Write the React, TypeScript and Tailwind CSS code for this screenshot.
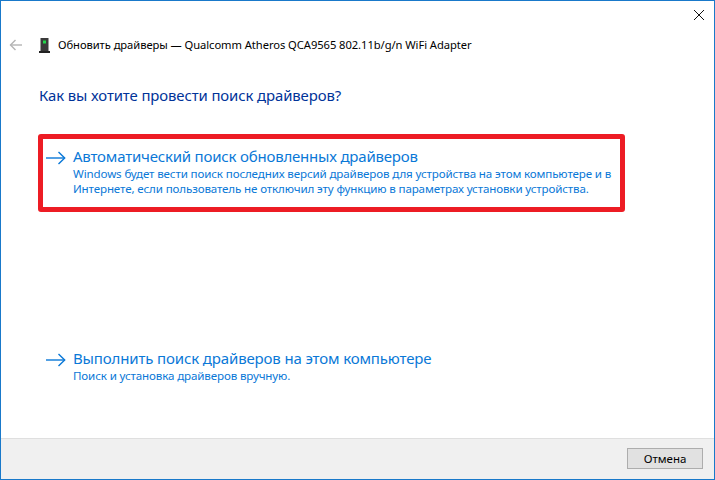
const font = "font-['Noto_Sans',sans-serif]"

function ArrowIcon() {
  return (
    <svg width="20" height="14" viewBox="0 0 20 14" className="shrink-0 mt-[5px]" fill="none" stroke="#0a78d7" strokeWidth="1.4">
      <path d="M0 7h18.5" />
      <path d="M12.5 1l6.2 6-6.2 6" />
    </svg>
  )
}

function Option({ title, titleClass, lines }: { title: string; titleClass: string; lines: string[] }) {
  return (
    <div className="flex gap-[7px]">
      <ArrowIcon />
      <div>
        <div className={`text-[15px] leading-[20px] text-[#0a78d7] whitespace-nowrap ${titleClass}`}>{title}</div>
        {lines.map((l) => (
          <div key={l} className="text-[11.6px] leading-[15px] tracking-[-0.14px] text-[#0a78d7] whitespace-nowrap">{l}</div>
        ))}
      </div>
    </div>
  )
}

export default function App() {
  return (
    <div className={`w-[715px] h-[480px] flex flex-col bg-white border border-[#1979ca] overflow-hidden ${font}`}>
      <div className="h-[30px] flex justify-end items-start">
        <svg width="12" height="12" viewBox="0 0 12 12" className="mt-[8px] mr-[9px]" stroke="#111" strokeWidth="1" fill="none">
          <path d="M1 1l10 10M11 1L1 11" />
        </svg>
      </div>
      <div className="flex items-center h-[28px] pl-[8px]">
        <svg width="14" height="12" viewBox="0 0 14 12" fill="none" stroke="#b4b4b4" strokeWidth="1.4">
          <path d="M13 6H1.5" />
          <path d="M6.5 1L1.5 6l5 5" />
        </svg>
        <svg width="11" height="15" viewBox="0 0 11 15" className="ml-[16px]">
          <rect x="1.5" y="0" width="8" height="13" fill="#3a3a3a" />
          <rect x="0" y="13" width="11" height="2" fill="#222" />
          <rect x="4" y="2.5" width="3" height="3" fill="#22d84a" />
        </svg>
        <span className="ml-[8px] text-[11.2px] tracking-[-0.06px] text-black whitespace-nowrap">
          Обновить драйверы — Qualcomm Atheros QCA9565 802.11b/g/n WiFi Adapter
        </span>
      </div>
      <div className="pl-[38px] mt-[26px] text-[14.9px] leading-[20px] tracking-[-0.1px] text-[#003399]">
        Как вы хотите провести поиск драйверов?
      </div>
      <div className="ml-[37px] mt-[29px] w-[587px] h-[78px] border-[5px] border-[#ed1c24] rounded-[3px] pl-[3px] pt-[7px]">
        <Option
          title="Автоматический поиск обновленных драйверов"
          titleClass="tracking-[-0.2px]"
          lines={[
            'Windows будет вести поиск последних версий драйверов для устройства на этом компьютере и в',
            'Интернете, если пользователь не отключил эту функцию в параметрах установки устройства.',
          ]}
        />
      </div>
      <div className="ml-[45px] mt-[136px]">
        <Option
          title="Выполнить поиск драйверов на этом компьютере"
          titleClass="tracking-[-0.14px]"
          lines={['Поиск и установка драйверов вручную.']}
        />
      </div>
      <div className="mt-auto h-[41px] bg-[#f0f0f0] border-t border-[#dfdfdf] flex justify-end items-start pr-[11px] pt-[9px]">
        <button className="w-[76px] h-[21px] bg-[#e1e1e1] border border-[#adadad] text-[11.5px] leading-[18px] text-black">
          Отмена
        </button>
      </div>
    </div>
  )
}
